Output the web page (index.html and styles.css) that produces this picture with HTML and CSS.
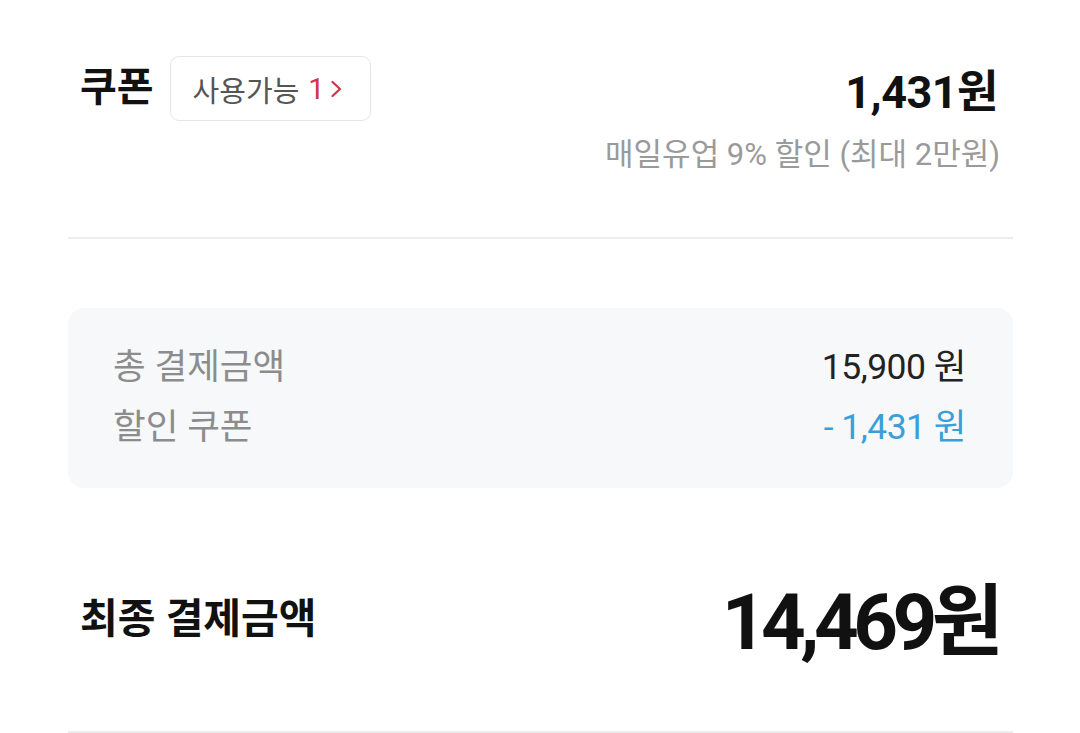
FILE: index.html
```html
<!DOCTYPE html>
<html lang="ko">
<head>
<meta charset="utf-8">
<link rel="stylesheet" href="styles.css">
</head>
<body>
<div class="page">
  <section class="coupon">
    <div class="coupon-head">
      <div class="coupon-left">
        <span class="coupon-title">쿠폰</span>
        <button class="coupon-btn"><span class="btn-label">사용가능</span><span class="btn-count">1</span><svg class="chev" width="13" height="22" viewBox="0 0 13 22"><path d="M2.5 4 L10 11 L2.5 18" fill="none" stroke="#d3344c" stroke-width="2.3" stroke-linecap="round" stroke-linejoin="round"/></svg></button>
      </div>
      <span class="coupon-amount">1,431원</span>
    </div>
    <div class="coupon-sub">매일유업 9% 할인 (최대 2만원)</div>
  </section>

  <section class="summary">
    <div class="sum-row"><span class="sum-label">총 결제금액</span><span class="sum-value">15,900 원</span></div>
    <div class="sum-row"><span class="sum-label">할인 쿠폰</span><span class="sum-value discount">- 1,431 원</span></div>
  </section>

  <section class="final">
    <span class="final-label">최종 결제금액</span>
    <span class="final-amount">14,469원</span>
  </section>
</div>
</body>
</html>
```

FILE: styles.css
```css
html, body {
  margin: 0;
  padding: 0;
  background: #ffffff;
}

body {
  font-family: Roboto, "Noto Sans CJK KR", "Noto Sans", sans-serif;
  color: #111111;
}

.page {
  padding: 0 67px 0 68px;
}

.coupon {
  padding-top: 56px;
  padding-bottom: 65px;
  border-bottom: 2px solid #ececec;
}

.coupon-head {
  display: flex;
  align-items: center;
  justify-content: space-between;
  height: 65px;
  padding: 0 15px 0 12px;
}

.coupon-left {
  display: flex;
  align-items: center;
  gap: 16px;
}

.coupon-title {
  font-size: 40px;
  font-weight: 700;
  color: #111111;
  line-height: 1;
  margin-top: -2px;
}

.coupon-btn {
  display: flex;
  align-items: center;
  height: 65px;
  box-sizing: border-box;
  padding: 0 27px 0 22px;
  border: 1.5px solid #e6e6e6;
  border-radius: 9px;
  background: #ffffff;
  font-family: inherit;
  font-size: 29px;
  color: #555555;
  cursor: pointer;
}

.btn-label {
  margin-right: 9px;
}

.btn-count {
  color: #d3344c;
  margin-right: 5px;
}

.chev {
  display: block;
}

.coupon-amount {
  font-size: 45px;
  font-weight: 700;
  color: #111111;
  letter-spacing: -0.5px;
}

.coupon-sub {
  margin-top: 17px;
  text-align: right;
  padding-right: 13px;
  font-size: 31px;
  line-height: 34px;
  color: #9a9a9a;
}

.summary {
  margin-top: 69px;
  background: #f6f8f9;
  border-radius: 16px;
  padding: 25px 47px 35px 45px;
}

.sum-row {
  display: flex;
  justify-content: space-between;
  align-items: center;
  height: 60px;
}

.sum-label {
  font-size: 35.5px;
  color: #8c8c8c;
}

.sum-value {
  font-size: 35.5px;
  color: #222222;
  letter-spacing: -0.5px;
}

.sum-value.discount {
  color: #3a9fd9;
}

.final {
  margin-top: 82px;
  height: 90px;
  padding: 0 15px 71px 12px;
  display: flex;
  align-items: center;
  justify-content: space-between;
  border-bottom: 2px solid #ececec;
}

.final-label {
  font-size: 41px;
  font-weight: 700;
  color: #111111;
}

.final-amount {
  font-size: 78px;
  font-weight: 700;
  color: #111111;
  letter-spacing: -5.5px;
}
```
